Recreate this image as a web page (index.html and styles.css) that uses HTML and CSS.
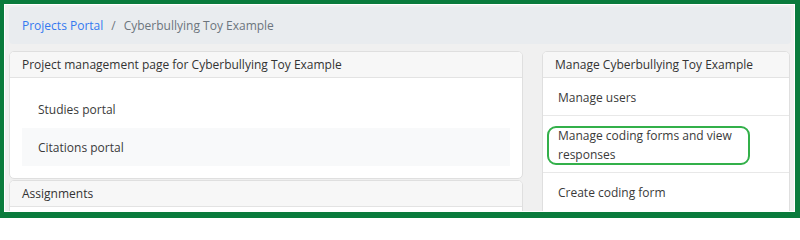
FILE: index.html
```html
<!DOCTYPE html>
<html lang="en">
<head>
<meta charset="utf-8">
<title>Project management</title>
<link rel="stylesheet" href="styles.css">
</head>
<body>
<div class="frame">
  <div class="inner">
    <nav class="breadcrumb">
      <a class="crumb-link" href="#">Projects Portal</a>
      <span class="crumb-sep">/</span>
      <span class="crumb-active">Cyberbullying Toy Example</span>
    </nav>
    <div class="row">
      <div class="col-left">
        <section class="card">
          <div class="card-header">Project management page for Cyberbullying Toy Example</div>
          <div class="card-body">
            <div class="list-item">Studies portal</div>
            <div class="list-item list-item-alt">Citations portal</div>
          </div>
        </section>
        <section class="card card-tall">
          <div class="card-header">Assignments</div>
        </section>
      </div>
      <section class="card card-right">
        <div class="card-header">Manage Cyberbullying Toy Example</div>
        <div class="menu-item">Manage users</div>
        <div class="menu-item">Manage coding forms and view responses<span class="highlight-box"></span></div>
        <div class="menu-item menu-item-last">Create coding form</div>
      </section>
    </div>
  </div>
</div>
</body>
</html>
```
FILE: styles.css
```css
* { box-sizing: border-box; }
html, body {
  margin: 0;
  padding: 0;
  width: 800px;
  height: 218px;
  overflow: hidden;
}
body {
  font-family: "Open Sans", "Noto Sans", sans-serif;
  font-size: 12px;
  line-height: 19px;
  color: #3a3a3a;
  background: #ffffff;
}
.frame {
  width: 800px;
  height: 218px;
  border-style: solid;
  border-color: #0a7b3c;
  border-width: 4px 5px 6px 4px;
}
.inner {
  height: 100%;
  border: 1px solid #ffffff;
  background: #f0f0f0;
  padding: 2px 2px 0 4px;
  overflow: hidden;
}
.breadcrumb {
  display: flex;
  align-items: center;
  height: 37px;
  margin-right: 1px;
  padding: 0 13px;
  background: #e9ecef;
  border-radius: 4px;
}
.crumb-link { color: #3479f0; text-decoration: none; }
.crumb-sep { color: #6c757d; padding: 0 8px; }
.crumb-active { color: #6c757d; }
.row {
  display: grid;
  grid-template-columns: 514px 248px;
  column-gap: 19px;
  margin-top: 7px;
  align-items: start;
}
.col-left {
  display: flex;
  flex-direction: column;
  gap: 1px;
}
.card {
  background: #ffffff;
  border: 1px solid #dfdfdf;
  border-radius: 5px;
  overflow: hidden;
}
.card-tall { height: 60px; }
.card-header {
  background: #f7f7f7;
  border-bottom: 1px solid #e3e3e3;
  padding: 3px 12px;
  color: #333333;
}
.card-body { padding: 12px; }
.list-item {
  padding: 10px 16px 9px;
  color: #3a3a3a;
}
.list-item-alt { background: #f8f9fa; }
.menu-item {
  position: relative;
  padding: 10px 15px 8px;
  border-bottom: 1px solid #e8e8e8;
  color: #3a3a3a;
}
.menu-item-last { padding-bottom: 20px; }
.highlight-box {
  position: absolute;
  left: 4px;
  top: 10px;
  width: 203px;
  height: 39px;
  border: 2px solid #33b04a;
  border-radius: 9px;
  pointer-events: none;
}
```
